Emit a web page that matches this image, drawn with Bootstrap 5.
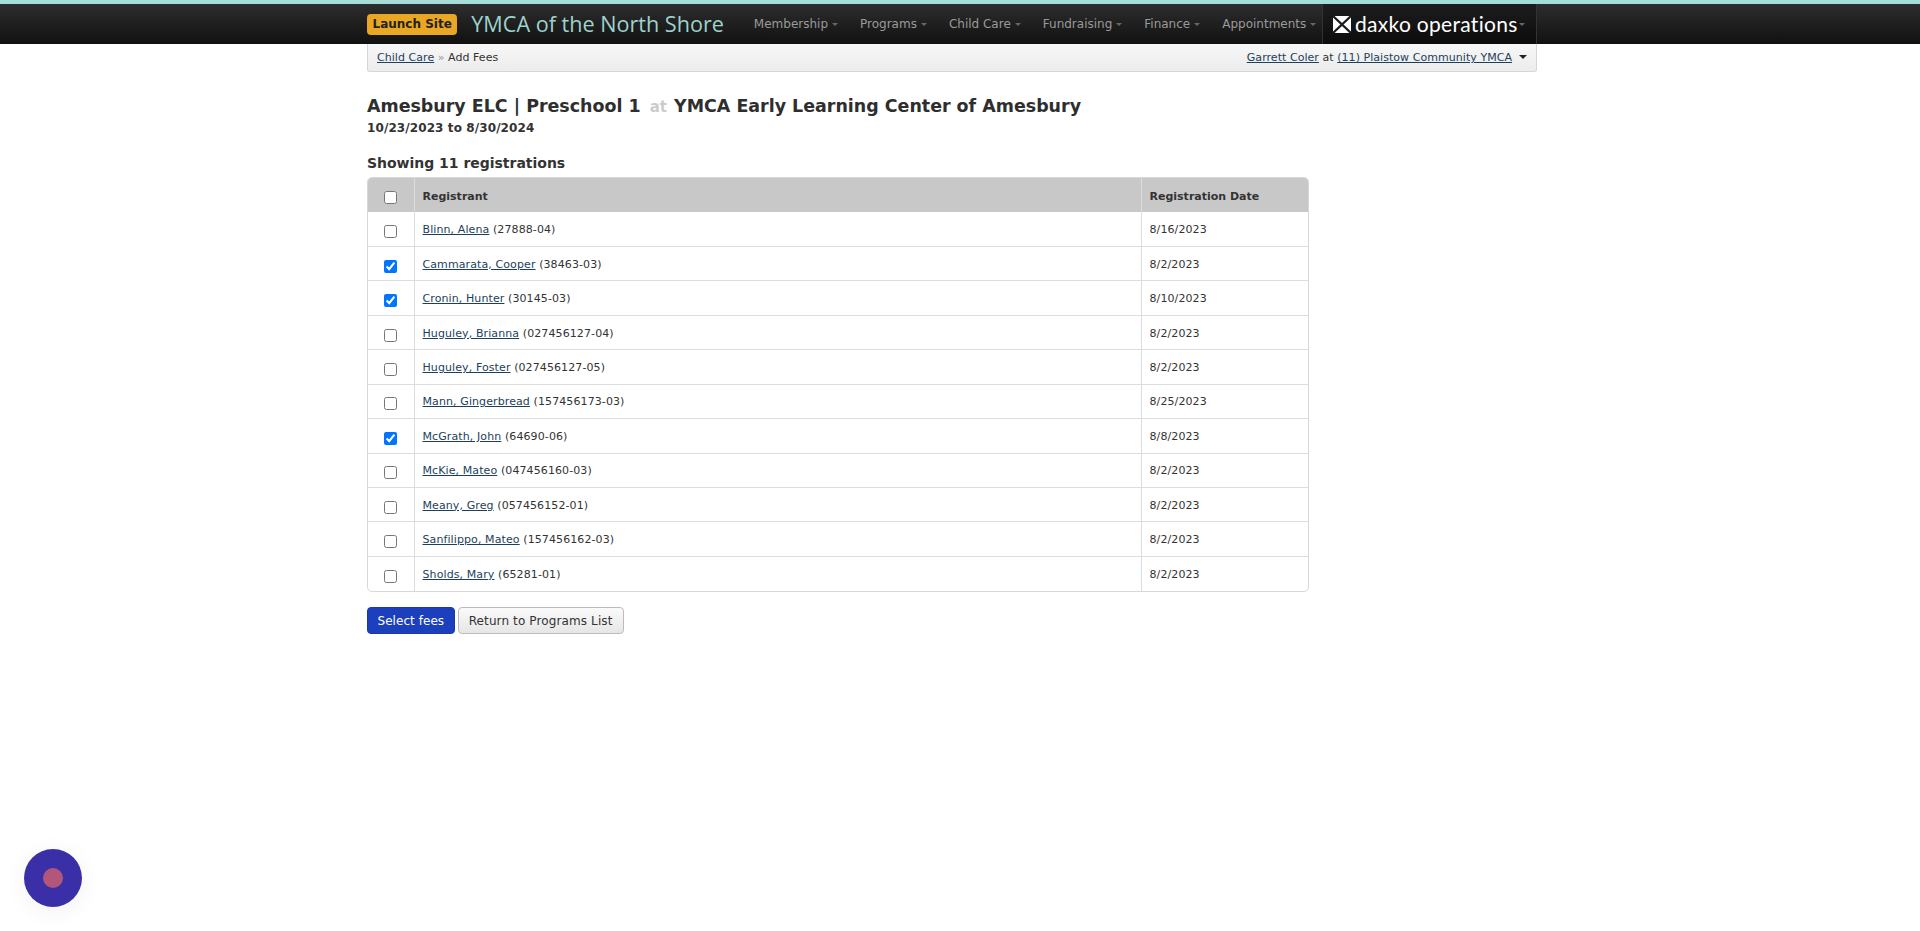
<!DOCTYPE html>
<html lang="en">
<head>
  <meta charset="UTF-8" />
  <meta name="viewport" content="width=device-width, initial-scale=1.0"/>
  <title>Add Fees</title>
  <link href="https://cdn.jsdelivr.net/npm/bootstrap@5.3.3/dist/css/bootstrap.min.css" rel="stylesheet">
  <style>
    body { font-family: "DejaVu Sans", Verdana, sans-serif; font-size: 11px; letter-spacing: .1px; color: #333; background: #fff; }
    a { color: #1d3f5c; }
    .page-wrap { width: 1170px; margin-left: 367px; }

    .top-bar { border-top: 4px solid #a6dcd8; height: 44px; background: linear-gradient(#2d2d2d, #111); letter-spacing: 0; }
    .top-bar .page-wrap { height: 40px; }
    .launch-btn { background: #eaa723; color: #222; font-size: 12px; font-weight: bold; border-radius: 4px; padding: 2px 5.5px; line-height: 17px; text-decoration: none; white-space: nowrap; flex-shrink: 0; }
    .site-name { color: #9ed2cd; font-size: 21.6px; margin-left: 14px; margin-right: 17px; white-space: nowrap; text-decoration: none; font-family: "Open Sans", sans-serif; }
    .main-link { color: #9a9a9a; font-size: 12px; padding: 0 9px 0 13px; text-decoration: none; white-space: nowrap; }
    .main-link::after { content: ""; display: inline-block; margin-left: 4px; vertical-align: 2px; border-top: 3px solid #666; border-left: 3.5px solid transparent; border-right: 3.5px solid transparent; }
    .main-link-last { padding-right: 3px; }
    .daxko-box { margin-left: auto; width: 215px; height: 40px; flex-shrink: 0; background: linear-gradient(#1d1d1d, #0c0c0c); border-left: 1px solid #333; border-right: 1px solid #333; padding-left: 10px; color: #fff; text-decoration: none; }
    .daxko-name { font-family: Lato, sans-serif; font-size: 21px; margin-left: 4px; letter-spacing: .3px; }
    .daxko-box::after { content: ""; display: inline-block; margin-left: 1px; border-top: 3px solid #666; border-left: 3.5px solid transparent; border-right: 3.5px solid transparent; }

    .sub-bar { height: 28px; padding: 0 9px; background: linear-gradient(#f7f7f7, #ececec); border: 1px solid #d6d6d6; border-top: 0; border-radius: 0 0 3px 3px; line-height: 28px; letter-spacing: .05px; }
    .crumb-sep { color: #999; }
    .caret-down { display: inline-block; margin-left: 7px; vertical-align: 2px; border-top: 4px solid #222; border-left: 4px solid transparent; border-right: 4px solid transparent; }

    .page-title { font-size: 17.45px; font-weight: bold; color: #2e2e2e; margin: 0; padding-top: 22px; line-height: 24px; letter-spacing: 0; }
    .title-at { color: #ccc; font-size: 15px; font-weight: bold; margin: 0 1px 0 3px; }
    .page-dates { font-size: 12px; font-weight: bold; line-height: 16px; margin-top: 1px; }
    .page-count { font-size: 14px; font-weight: bold; line-height: 18px; margin: 18px 0 5px; letter-spacing: -.02px; }

    .reg-wrap { width: 942px; border: 1px solid #d8d8d8; border-radius: 5px; overflow: hidden; }
    .reg-table { margin: 0; table-layout: fixed; font-size: 11px; --bs-table-color: #333; }
    .reg-table th { background: #c8c8c8; border-bottom: 0; height: 34px; font-weight: bold; color: #333; vertical-align: middle; padding: 4px 8px 0; letter-spacing: 0; }
    .reg-table td { height: 34.45px; padding: 2.5px 8px 0; vertical-align: middle; border-color: #ddd; }
    .reg-table tr:last-child td { border-bottom: 0; }
    .reg-table th + th, .reg-table td + td { border-left: 1px solid #ddd; }
    .reg-table .check-col { width: 46px; text-align: center; padding: 0; }
    .reg-table .date-col { width: 167px; }
    .reg-table input { display: block; margin: 5px auto 0; }

    .btn-row { margin-top: 15.5px; gap: 3px; }
    .btn-fees { background: #1b3fbd; border: 1px solid #1a3aa8; color: #fff; font-size: 12px; height: 27px; padding: 0 9.5px; border-radius: 4px; letter-spacing: .05px; }
    .btn-fees:hover { background: #16339b; color: #fff; }
    .btn-back { background: linear-gradient(#fafafa, #e6e6e6); border: 1px solid #bbb; color: #333; font-size: 12px; height: 27px; padding: 0 10px; border-radius: 4px; letter-spacing: .12px; }

    .chat-bubble { position: fixed; left: 24px; bottom: 24px; width: 58px; height: 58px; border-radius: 50%; background: #3a2fa6; box-shadow: 0 4px 24px rgba(0,0,0,.06); }
    .chat-dot { width: 20px; height: 20px; border-radius: 50%; background: #b2577a; }
  </style>
</head>
<body>
  <div class="top-bar">
    <div class="page-wrap d-flex align-items-center">
      <a class="launch-btn" href="#">Launch Site</a>
      <a class="site-name" href="#">YMCA of the North Shore</a>
      <a class="main-link" href="#">Membership</a>
      <a class="main-link" href="#">Programs</a>
      <a class="main-link" href="#">Child Care</a>
      <a class="main-link" href="#">Fundraising</a>
      <a class="main-link" href="#">Finance</a>
      <a class="main-link main-link-last" href="#">Appointments</a>
      <a class="daxko-box d-flex align-items-center" href="#">
        <svg width="18" height="17" viewBox="0 0 18 17"><rect width="18" height="17" rx="1" fill="#fff"/><path d="M0 0 18 17M18 0 0 17" stroke="#1a1a1a" stroke-width="2.2"/></svg>
        <span class="daxko-name">daxko operations</span>
      </a>
    </div>
  </div>

  <div class="page-wrap">
    <div class="sub-bar d-flex justify-content-between">
      <div><a href="#">Child Care</a> <span class="crumb-sep">»</span> Add Fees</div>
      <div><a href="#">Garrett Coler</a> at <a href="#">(11) Plaistow Community YMCA</a><span class="caret-down"></span></div>
    </div>

    <h1 class="page-title">Amesbury ELC | Preschool 1 <span class="title-at">at</span> YMCA Early Learning Center of Amesbury</h1>
    <div class="page-dates">10/23/2023 to 8/30/2024</div>
    <div class="page-count">Showing 11 registrations</div>

    <div class="reg-wrap">
      <table class="table reg-table">
        <thead>
          <tr><th class="check-col"><input type="checkbox"></th><th>Registrant</th><th class="date-col">Registration Date</th></tr>
        </thead>
        <tbody id="regRows"></tbody>
      </table>
    </div>

    <div class="btn-row d-flex">
      <button class="btn btn-fees">Select fees</button>
      <button class="btn btn-back">Return to Programs List</button>
    </div>
  </div>

  <div class="chat-bubble d-flex align-items-center justify-content-center"><div class="chat-dot"></div></div>

  <script>
    const registrations = [
      ["Blinn, Alena", "27888-04", "8/16/2023", false],
      ["Cammarata, Cooper", "38463-03", "8/2/2023", true],
      ["Cronin, Hunter", "30145-03", "8/10/2023", true],
      ["Huguley, Brianna", "027456127-04", "8/2/2023", false],
      ["Huguley, Foster", "027456127-05", "8/2/2023", false],
      ["Mann, Gingerbread", "157456173-03", "8/25/2023", false],
      ["McGrath, John", "64690-06", "8/8/2023", true],
      ["McKie, Mateo", "047456160-03", "8/2/2023", false],
      ["Meany, Greg", "057456152-01", "8/2/2023", false],
      ["Sanfilippo, Mateo", "157456162-03", "8/2/2023", false],
      ["Sholds, Mary", "65281-01", "8/2/2023", false]
    ];
    document.getElementById("regRows").innerHTML = registrations.map(r =>
      `<tr><td class="check-col"><input type="checkbox"${r[3] ? " checked" : ""}></td>` +
      `<td><a href="#">${r[0]}</a> (${r[1]})</td><td>${r[2]}</td></tr>`
    ).join("");
  </script>
  <script src="https://cdn.jsdelivr.net/npm/bootstrap@5.3.3/dist/js/bootstrap.bundle.min.js"></script>
</body>
</html>
